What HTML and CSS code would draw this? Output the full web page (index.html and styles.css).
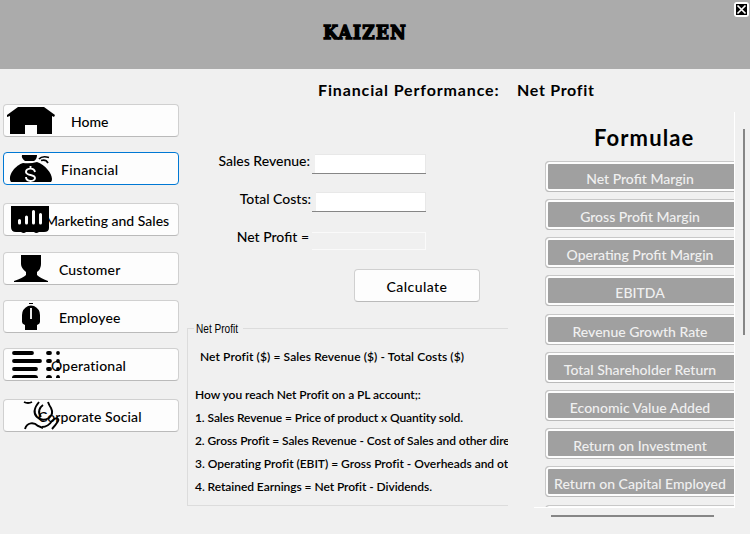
FILE: index.html
```html
<!DOCTYPE html>
<html lang="en">
<head>
<meta charset="utf-8">
<title>Kaizen</title>
<link rel="stylesheet" href="styles.css">
</head>
<body>
<header class="banner">
  <h1 class="brand">KAIZEN</h1>
  <button class="close" aria-label="Close"><svg width="11" height="11" viewBox="0 0 11 11"><rect width="11" height="11"/><path d="M1.5 1.5L9.5 9.5M9.5 1.5L1.5 9.5" stroke="#fff" stroke-width="1.7"/></svg></button>
</header>
<div class="title"><span class="section">Financial Performance:</span><span class="page">Net Profit</span></div>
<main class="body">
  <nav class="sidebar">
    <button class="nav home"><svg class="icon" viewBox="0 0 60 33"><path d="M4 11L15 3H41L52 11L51 13L49 12V30H34V21H22V30H7V12L4 13Z"/></svg><span>Home</span></button>
    <button class="nav financial active"><svg class="icon" viewBox="0 0 60 33"><path d="M19 3H34Q34 7 31 9H22Q18 6 19 3ZM20 11Q27 12 34 10C42 13 49 21 49 27Q49 29 48 30H8C4 23 13 13 20 11Z"/><path d="M36 7Q39 3.500 46 5.500M38 8.500Q43 7 45 11" fill="none" stroke="#000" stroke-width="1.7"/><path d="M32 20C31 15 23 16 23 20C23 24 32 22 32 26C32 30 23 30 23 25M27.5 14V17M27.5 28V30" fill="none" stroke="#fdfdfd" stroke-width="1.9"/></svg><span>Financial</span></button>
    <button class="nav marketing"><svg class="icon" viewBox="0 0 60 33"><path d="M8 3H46V25Q46 29 41 29H36Q33 31 31 29H23Q21 31 18 29H13Q8 29 8 24Z"/><path d="M16.5 17.500V20M23.500 14V20M30.500 8.500V20M37.500 11.500V20" stroke="#fff" stroke-width="3" stroke-linecap="round"/></svg><span>Marketing and Sales</span></button>
    <button class="nav customer"><svg class="icon" viewBox="0 0 60 33"><path d="M18 3H38V12Q38 17 34 20V23Q37 26 45 29V30H11V29Q20 26 23 23V20Q18 16 18 12Z"/></svg><span>Customer</span></button>
    <button class="nav employee"><svg class="icon" viewBox="0 0 60 33"><path d="M26 3H30V4H26ZM25 6Q28 5 31 6Q37 9 37 15V22Q37 24 34 25V30H22V25Q19 24 19 22V15Q19 9 25 6Z"/><path d="M28 8V19" stroke="#fff" stroke-width="1.8"/></svg><span>Employee</span></button>
    <button class="nav operational"><svg class="icon" viewBox="0 0 60 33"><g stroke="#000" stroke-width="3.800" stroke-linecap="round"><path d="M11 5H29M11 13H37M11 21H33M45 5H47M45 13H47M45 21H47M55 5H55.010M55 13H55.010M55 21H55.010"/></g><path d="M9 30Q9 27 12 27H32Q35 27 35 30ZM43 30Q43 27 46 27T49 30ZM53 30Q53 27 55 27T57 30Z"/></svg><span>Operational</span></button>
    <button class="nav social"><svg class="icon" viewBox="0 0 60 33"><g fill="none" stroke="#000" stroke-width="1.900"><path d="M21 3Q25 5 29 3M36 3C31 9 30 14 34 18Q39 23 46 19Q51 15 48 9Q46 6 45 3M38 18C34 13 37 8 40 6M22 30C24 23 31 23 35 27L40 29M39 28Q45 28 49 22Q53 18 55 20Q57 21 49 30"/></g></svg><span>Corporate Social</span></button>
  </nav>
  <section class="center">
    <form class="form">
      <div class="row r1"><label>Sales Revenue:</label><input class="field"></div>
      <div class="row r2"><label>Total Costs:</label><input class="field short"></div>
      <div class="row r3"><label>Net Profit =</label><output class="result"></output></div>
      <button type="button" class="calc"><span>Calculate</span></button>
    </form>
    <div class="group">
      <div class="legend"><span>Net Profit</span></div>
      <p class="formula"><span class="l0">Net Profit ($) = Sales Revenue ($) - Total Costs ($)</span></p>
      <p><span class="l1">How you reach Net Profit on a PL account;:</span></p>
      <p><span class="l2">1. Sales Revenue = Price of product x Quantity sold.</span></p>
      <p><span class="l3">2. Gross Profit = Sales Revenue - Cost of Sales and other dire</span></p>
      <p><span class="l4">3. Operating Profit (EBIT) = Gross Profit - Overheads and ot</span></p>
      <p><span class="l5">4. Retained Earnings = Net Profit - Dividends.</span></p>
    </div>
  </section>
  <section class="side">
    <div class="pane">
      <h2>Formulae</h2>
      <div class="list">
        <button class="f"><span>Net Profit Margin</span></button>
        <button class="f"><span>Gross Profit Margin</span></button>
        <button class="f"><span>Operating Profit Margin</span></button>
        <button class="f gap"><span>EBITDA</span></button>
        <button class="f"><span>Revenue Growth Rate</span></button>
        <button class="f"><span>Total Shareholder Return</span></button>
        <button class="f"><span>Economic Value Added</span></button>
        <button class="f"><span>Return on Investment</span></button>
        <button class="f gap"><span>Return on Capital Employed</span></button>
        <button class="f"></button>
      </div>
    </div>
    <div class="vbar"></div>
    <div class="hbar"></div>
  </section>
</main>
</body>
</html>
```

FILE: styles.css
```css
* { box-sizing: border-box; }
body { margin: 0; width: 750px; height: 534px; overflow: hidden; background: #f0f0f0; color: #000; font-family: Lato, sans-serif; font-size: 14px; font-weight: 500; }
button { font: inherit; color: inherit; padding: 0; }
p, h1, h2 { margin: 0; }
span, label { white-space: nowrap; }
.banner { position: relative; height: 69px; background: #ababab; display: flex; justify-content: center; padding-right: 20px; }
.brand { font: bold 19px/24px "DejaVu Serif", serif; -webkit-text-stroke: 1.6px #000; letter-spacing: 1.5px; margin-top: 20px; transform: scaleX(.89); }
.close { position: absolute; right: 1px; top: 2px; width: 15px; height: 15px; border: 0; border-radius: 3px; background: #fff; display: grid; place-items: center; }
.title { height: 35px; padding: 11px 0 0 318px; display: flex; font-size: 16px; line-height: 20px; font-weight: 700; }
.section { width: 199px; letter-spacing: .86px; }
.page { letter-spacing: .7px; }
.body { display: flex; height: 430px; }
.sidebar { width: 187px; padding-left: 3px; }
.nav { position: relative; display: flex; align-items: center; width: 176px; height: 33px; margin-bottom: 15px; border: 1px solid #d0d0d0; border-bottom-color: #bababa; border-radius: 4px; background: #fdfdfd; padding-top: 1px; }
.nav.active { border-color: #0078d4; }
.icon { position: absolute; left: -1px; top: -1px; width: 60px; height: 33px; }
.home span { margin-left: 67px; }
.financial span { margin-left: 57px; letter-spacing: .35px; }
.financial, .operational { margin-bottom: 18px; }
.marketing { margin-bottom: 16px; }
.marketing span { margin-left: 41px; }
.customer span, .employee span { margin-left: 55px; letter-spacing: .15px; }
.operational span { margin-left: 47px; letter-spacing: .2px; }
.social span { margin-left: 34px; letter-spacing: .1px; }
.center { width: 321px; overflow: hidden; }
.form { height: 224px; padding-top: 48px; }
.row { display: flex; align-items: flex-start; height: 38px; }
.row label { width: 123px; text-align: right; line-height: 18px; margin-right: 5px; }
.r2 label { width: 124px; }
.r3 label { width: 122px; margin-right: 3px; }
.field { width: 111px; height: 19px; margin-top: 2px; padding: 0; border: 1px solid #e8e8e8; border-width: 1px 1px 0 0; border-radius: 0; background: #fff; outline: 0; }
.field.short { width: 110px; }
.row:not(.r3) { background: linear-gradient(#868686, #868686) 125px 21px / 114px 1px no-repeat; }
.result { width: 114px; height: 18px; margin-top: 4px; border: 1px solid #fafafa; border-left: 0; }
.calc { display: grid; place-items: center; width: 126px; height: 33px; margin: 3px 0 0 167px; padding-top: 1px; border: 1px solid #d0d0d0; border-bottom-color: #bababa; border-radius: 4px; background: #fdfdfd; letter-spacing: .45px; }
.group { height: 178px; width: 360px; border: 1px solid #dcdcdc; padding: 0 0 0 7px; font-size: 12px; font-weight: 600; }
.legend { width: 49px; height: 14px; margin: -7px 0 14px -1px; padding-left: 2px; background: #f0f0f0; font: 12px/14px "Liberation Sans", sans-serif; }
.legend span { display: inline-block; transform: scaleX(.84); transform-origin: left; }
.group p { height: 23px; line-height: 14px; }
.group .formula { height: 38px; padding-left: 5px; }
.l0 { letter-spacing: .1px; }
.l1 { letter-spacing: -.05px; }
.l2, .l3 { letter-spacing: -.09px; }
.l4 { letter-spacing: -.02px; }
.l5 { letter-spacing: -.06px; }
.side { display: grid; grid-template: 396px 26px / 201px 15px; margin: 8px 0 0 26px; }
.pane { overflow: hidden; border: 1px solid #fff; border-width: 0 1px 1px 0; }
.pane h2 { height: 49px; padding: 12px 0 0 60px; font-size: 22px; line-height: 28px; letter-spacing: 1.1px; }
.list { width: 194px; margin-left: 11px; }
.f { display: grid; place-items: center; width: 194px; height: 31px; margin-bottom: 7px; padding: 3px 4px 0 0; border: 1px solid #c8c8c8; border-bottom-color: #bababa; border-radius: 4px; background: #a0a0a0; box-shadow: inset 0 0 0 2px #fdfdfd; color: #f0f0f0; }
.f.gap { margin-bottom: 8px; }
.vbar { width: 2px; height: 206px; margin: 17px 0 0 8px; background: #868686; }
.hbar { width: 163px; height: 2px; margin: 7px 0 0 17px; background: #868686; }
```
